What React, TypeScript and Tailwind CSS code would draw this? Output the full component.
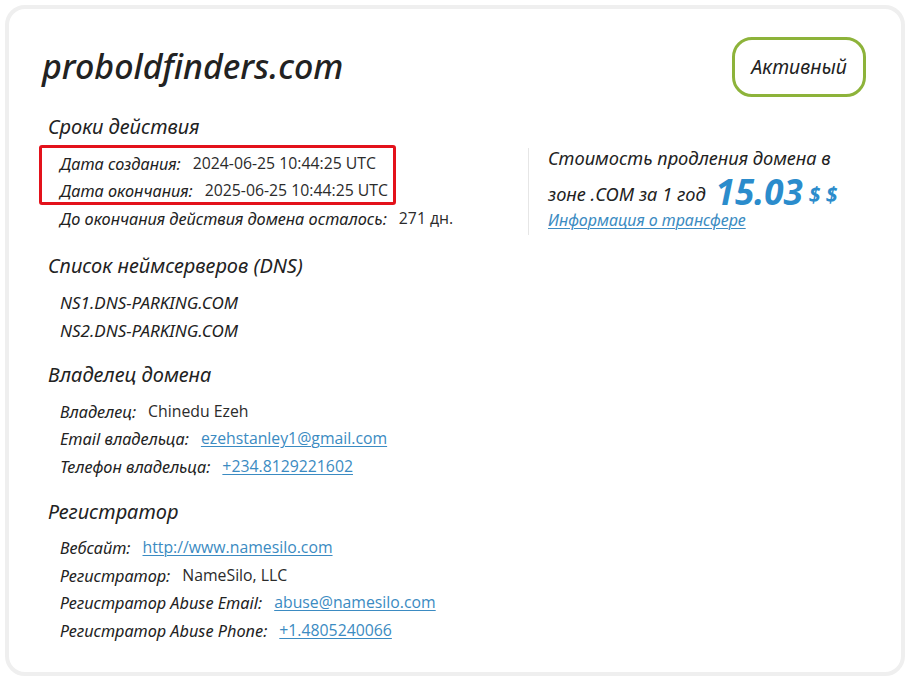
import React from "react";

const ital = { fontFamily: '"Noto Sans", "Open Sans", sans-serif' };

function Row({ label, children }: { label: string; children: React.ReactNode }) {
  return (
    <div className="flex items-center h-[27.5px] ml-[18px] whitespace-nowrap">
      <span className="italic text-[16.3px] text-[#222] font-['Noto_Sans',sans-serif]">{label}</span>
      <span className="ml-[12px] text-[15.8px] text-[#2b2b2b] font-['Open_Sans',sans-serif]">{children}</span>
    </div>
  );
}

function Link({ children }: { children: React.ReactNode }) {
  return <a className="text-[#3b8bc2] underline underline-offset-2 decoration-1">{children}</a>;
}

function Heading({ children, className = "" }: { children: React.ReactNode; className?: string }) {
  return (
    <div className={"ml-[6px] h-[28px] leading-[28px] italic text-[20px] text-[#222] font-['Noto_Sans',sans-serif] " + className}>
      {children}
    </div>
  );
}

export default function App() {
  return (
    <div className="w-[910px] h-[681px] bg-white p-[5px]" style={ital}>
      <div className="h-[671px] w-[900px] border-4 border-[#efefef] rounded-[20px] bg-white pt-[28px] pl-[33px] pr-[35px]">
        <div className="flex items-center justify-between h-[60px]">
          <div className="italic text-[34px] leading-[44px] text-[#222] font-medium font-['Noto_Sans',sans-serif] mt-[-2px]">proboldfinders.com</div>
          <div className="h-[60px] w-[134px] border-[3px] border-[#8db33a] rounded-[20px] flex items-center justify-center italic text-[19.5px] text-[#222]">
            Активный
          </div>
        </div>

        <div className="flex mt-[16px]">
          <div className="w-[486px]">
            <Heading>Сроки действия</Heading>
            <div className="mt-[9px] relative">
              <span className="absolute left-[-3px] top-[-5px] w-[357px] h-[60px] border-[3px] border-[#e3121b] rounded-[3px]" />
              <Row label="Дата создания:">2024-06-25 10:44:25 UTC</Row>
              <Row label="Дата окончания:">2025-06-25 10:44:25 UTC</Row>
            </div>
            <Row label="До окончания действия домена осталось:">271 дн.</Row>
          </div>
          <div className="mt-[35px] h-[87px] border-l border-[#e6e6e6] pl-[19px] text-[#222]">
            <div className="italic text-[18.3px] leading-[22px] mt-[-1px]">Стоимость продления домена в</div>
            <div className="italic text-[18.3px] leading-[24px] h-[41px] flex items-end pb-[4px] whitespace-nowrap">
              <span>зоне .COM за 1 год</span>
              <span className="ml-[10px] text-[35px] leading-[28px] font-bold text-[#2b8ccc]">15.03</span>
              <span className="ml-[6px] text-[21px] leading-[24px] font-bold text-[#2b8ccc]">$ $</span>
            </div>
            <div className="italic text-[16px] leading-[22px] mt-[-1px]">
              <Link>Информация о трансфере</Link>
            </div>
          </div>
        </div>

        <Heading className="mt-[17px]">Список неймсерверов (DNS)</Heading>
        <div className="mt-[9px]">
          <div className="ml-[18px] h-[27.5px] flex items-center italic text-[17px] text-[#222]">NS1.DNS-PARKING.COM</div>
          <div className="ml-[18px] h-[27.5px] flex items-center italic text-[17px] text-[#222]">NS2.DNS-PARKING.COM</div>
        </div>

        <Heading className="mt-[17px]">Владелец домена</Heading>
        <div className="mt-[9px]">
          <Row label="Владелец:">Chinedu Ezeh</Row>
          <Row label="Email владельца:"><Link>ezehstanley1@gmail.com</Link></Row>
          <Row label="Телефон владельца:"><Link>+234.8129221602</Link></Row>
        </div>

        <Heading className="mt-[17px]">Регистратор</Heading>
        <div className="mt-[9px]">
          <Row label="Вебсайт:"><Link>http://www.namesilo.com</Link></Row>
          <Row label="Регистратор:">NameSilo, LLC</Row>
          <Row label="Регистратор Abuse Email:"><Link>abuse@namesilo.com</Link></Row>
          <Row label="Регистратор Abuse Phone:"><Link>+1.4805240066</Link></Row>
        </div>
      </div>
    </div>
  );
}
